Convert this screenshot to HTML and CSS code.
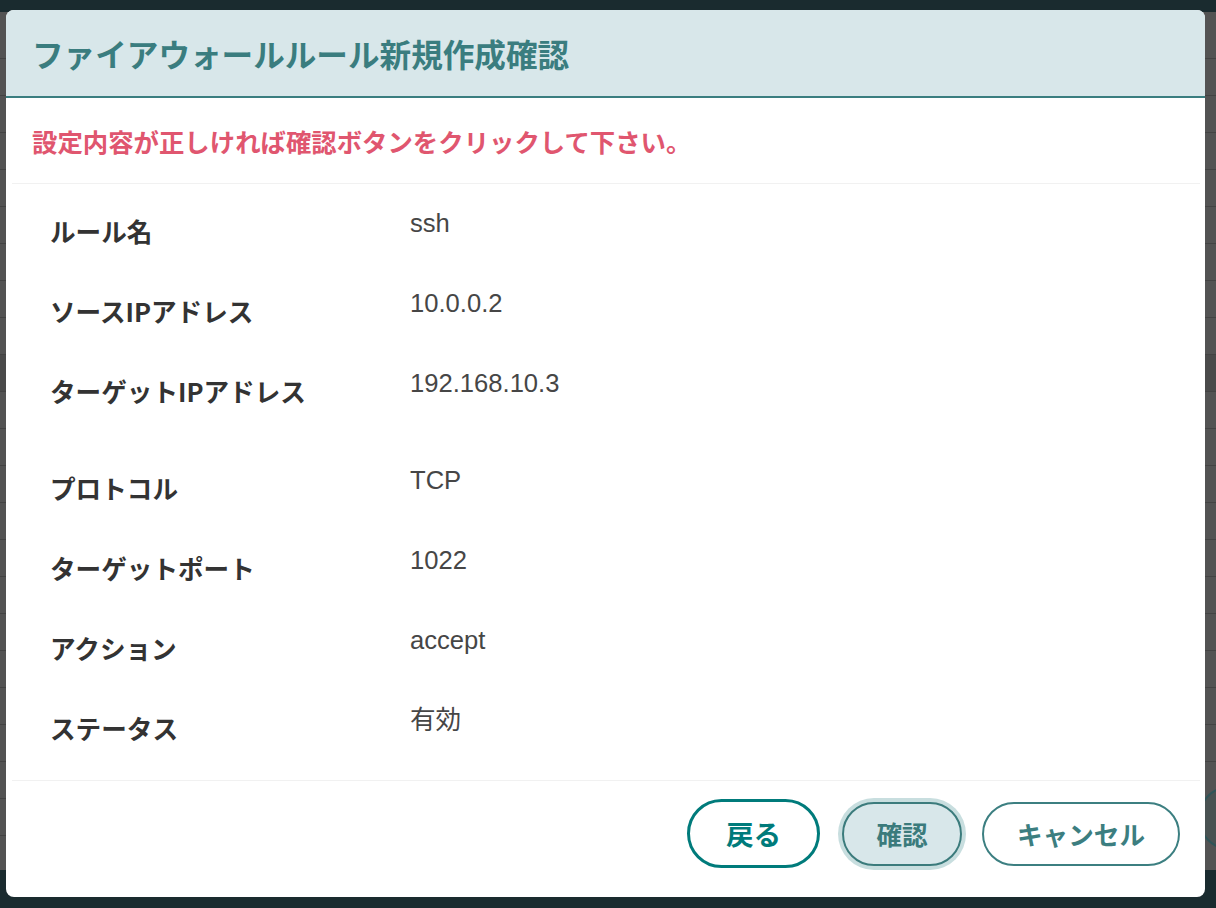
FILE: index.html
```html
<!DOCTYPE html>
<html lang="ja">
<head>
<meta charset="utf-8">
<title>ファイアウォールルール新規作成確認</title>
<link rel="stylesheet" href="styles.css">
</head>
<body>
<div class="page">
  <div class="page-header"></div>
  <div class="page-table">
    <div class="trow"></div><div class="trow"></div><div class="trow"></div><div class="trow"></div>
    <div class="trow"></div><div class="trow"></div><div class="trow"></div><div class="trow"></div>
    <div class="trow"></div><div class="trow dark"></div><div class="trow"></div><div class="trow"></div>
    <div class="trow"></div><div class="trow"></div><div class="trow"></div><div class="trow"></div>
    <div class="trow"></div><div class="trow"></div><div class="trow"></div><div class="trow"></div>
    <div class="trow"></div><div class="trow"></div><div class="trow"></div>
  </div>
  <div class="fab"></div>
</div>

<div class="modal" role="dialog" aria-labelledby="modal-title">
  <div class="modal-header">
    <h1 id="modal-title" class="modal-title">ファイアウォールルール新規作成確認</h1>
  </div>
  <div class="modal-message">設定内容が正しければ確認ボタンをクリックして下さい。</div>
  <div class="divider"></div>
  <dl class="detail-list">
    <div class="detail-row"><dt class="label">ルール名</dt><dd class="value">ssh</dd></div>
    <div class="detail-row"><dt class="label">ソースIPアドレス</dt><dd class="value">10.0.0.2</dd></div>
    <div class="detail-row tall"><dt class="label">ターゲットIPアドレス</dt><dd class="value">192.168.10.3</dd></div>
    <div class="detail-row"><dt class="label">プロトコル</dt><dd class="value">TCP</dd></div>
    <div class="detail-row"><dt class="label">ターゲットポート</dt><dd class="value">1022</dd></div>
    <div class="detail-row"><dt class="label">アクション</dt><dd class="value">accept</dd></div>
    <div class="detail-row last"><dt class="label">ステータス</dt><dd class="value">有効</dd></div>
  </dl>
  <div class="divider"></div>
  <div class="modal-footer">
    <button class="btn btn-back" type="button">戻る</button>
    <button class="btn btn-confirm" type="button">確認</button>
    <button class="btn btn-cancel" type="button">キャンセル</button>
  </div>
</div>
</body>
</html>
```
FILE: styles.css
```css
html, body {
  margin: 0;
  padding: 0;
}
body {
  width: 1216px;
  height: 908px;
  overflow: hidden;
  background: #1a2b2f;
  font-family: "Noto Sans CJK JP", "Noto Sans", sans-serif;
}

/* underlying page (dimmed by the overlay) */
.page {
  position: relative;
  height: 908px;
  display: flex;
  flex-direction: column;
}
.page-header {
  height: 12px;
  background: #1a2b2f;
}
.page-table {
  height: 858px;
  background: #535353;
  display: flex;
  flex-direction: column;
  padding-top: 10px;
  box-sizing: border-box;
  overflow: hidden;
}
.trow {
  flex: 0 0 36px;
  border-bottom: 1px solid #434343;
}
.trow.dark {
  background: #4a4a4a;
}
.fab {
  position: absolute;
  left: 1198px;
  top: 786px;
  width: 60px;
  height: 60px;
  border: 2px solid #2f5458;
  border-radius: 50%;
  background: #495252;
}

/* modal */
.modal {
  position: absolute;
  left: 6px;
  top: 10px;
  width: 1199px;
  height: 887px;
  background: #ffffff;
  border-radius: 8px;
  overflow: hidden;
  display: flex;
  flex-direction: column;
}
.modal-header {
  flex: 0 0 86px;
  background: #d8e7ea;
  border-bottom: 2px solid #3a7e80;
  display: flex;
  align-items: center;
  padding: 0 26px;
}
.modal-title {
  margin: 0;
  font-size: 31.6px;
  font-weight: 700;
  color: #3a7d7f;
  line-height: normal;
}
.modal-message {
  flex: 0 0 85px;
  display: flex;
  align-items: center;
  padding: 0 26px;
  font-size: 25.4px;
  font-weight: 700;
  color: #e0566f;
}
.divider {
  flex: 0 0 1px;
  margin: 0 5px 0 6px;
  background: #f1f1f1;
}
.detail-list {
  margin: 0;
  padding: 20px 0 0 44px;
  flex: 0 0 auto;
}
.detail-row {
  display: grid;
  grid-template-columns: 360px 1fr;
  height: 80px;
}
.detail-row.tall {
  height: 97px;
}
.detail-row.last {
  height: 79px;
}
.label {
  margin: 0;
  padding-top: 11px;
  font-size: 25.6px;
  font-weight: 700;
  line-height: 32px;
  color: #333333;
}
.value {
  margin: 0;
  padding-top: 3px;
  font-family: "Liberation Sans", "Noto Sans CJK JP", sans-serif;
  font-size: 25.6px;
  line-height: 32px;
  color: #464646;
}
.modal-footer {
  flex: 1 1 auto;
  display: flex;
  justify-content: flex-end;
  align-items: flex-start;
  gap: 20px;
  padding: 18px 25px 0 0;
}
.btn {
  box-sizing: border-box;
  height: 64px;
  margin-top: 2.5px;
  border-radius: 32px;
  background: #ffffff;
  font-family: "Noto Sans CJK JP", sans-serif;
  font-weight: 700;
  font-size: 25.6px;
  line-height: 1;
  padding: 0;
  display: flex;
  align-items: center;
  justify-content: center;
}
.btn-back {
  width: 133px;
  height: 69px;
  margin-top: 0;
  margin-right: 2px;
  border: 3px solid #007b7b;
  border-radius: 35px;
  color: #007b7b;
  font-size: 27.6px;
}
.btn-confirm {
  width: 120px;
  border: 2px solid #3b7b7c;
  background: #d8e7ea;
  color: #3b7b7c;
  box-shadow: 0 0 0 4px #c8dedf;
}
.btn-cancel {
  width: 198px;
  border: 2px solid #3c7f81;
  color: #3c7e80;
}
```
